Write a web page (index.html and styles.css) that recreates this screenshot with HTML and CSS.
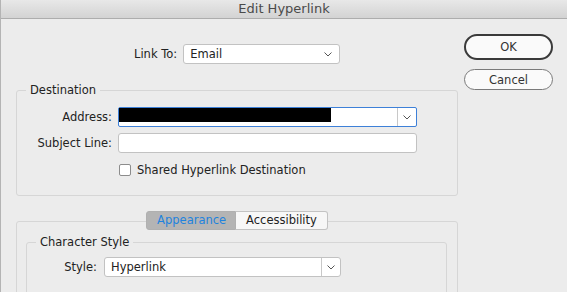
FILE: index.html
```html
<!DOCTYPE html>
<html lang="en">
<head>
    <meta charset="UTF-8">
    <title>Edit Hyperlink</title>
    <link rel="stylesheet" href="styles.css">
</head>
<body>
    <div class="titlebar">Edit Hyperlink</div>

    <div class="dialog">
        <div class="main">
            <div class="link-row">
                <span class="label">Link To:</span>
                <div class="select link-select">
                    <span class="value">Email</span>
                    <svg class="chev" width="8" height="5" viewBox="0 0 8 5"><polyline points="0.5,0.5 4,4 7.5,0.5" fill="none" stroke="#555" stroke-width="1"/></svg>
                </div>
            </div>

            <fieldset class="group dest">
                <legend>Destination</legend>
                <div class="form-grid">
                    <span class="label">Address:</span>
                    <div class="select combo focused">
                        <span class="redacted"></span>
                        <span class="divider"></span>
                        <svg class="chev" width="8" height="5" viewBox="0 0 8 5"><polyline points="0.5,0.5 4,4 7.5,0.5" fill="none" stroke="#555" stroke-width="1"/></svg>
                    </div>
                    <span class="label">Subject Line:</span>
                    <div class="text-input"></div>
                    <span></span>
                    <label class="check-row"><span class="checkbox"></span>Shared Hyperlink Destination</label>
                </div>
            </fieldset>

            <div class="tabs">
                <span class="tab active">Appearance</span>
                <span class="tab">Accessibility</span>
            </div>

            <div class="panel">
                <fieldset class="group charstyle">
                    <legend>Character Style</legend>
                    <div class="style-grid">
                        <span class="label">Style:</span>
                        <div class="select combo">
                            <span class="value">Hyperlink</span>
                            <span class="divider"></span>
                            <svg class="chev" width="8" height="5" viewBox="0 0 8 5"><polyline points="0.5,0.5 4,4 7.5,0.5" fill="none" stroke="#555" stroke-width="1"/></svg>
                        </div>
                    </div>
                </fieldset>
            </div>
        </div>

        <div class="buttons">
            <button class="btn default">OK</button>
            <button class="btn">Cancel</button>
        </div>
    </div>
</body>
</html>
```

FILE: styles.css
```css
* {
    margin: 0;
    padding: 0;
    box-sizing: border-box;
}

body {
    width: 567px;
    height: 292px;
    overflow: hidden;
    background: #ececec;
    font-family: 'DejaVu Sans', sans-serif;
    font-size: 11.5px;
    color: #222;
    border-left: 1px solid #b4b4b4;
}

.titlebar {
    height: 19px;
    line-height: 18px;
    text-align: center;
    font-size: 13px;
    color: #4a4a4a;
    background: linear-gradient(#e8e8e8, #d3d3d3);
    border-bottom: 1px solid #adadad;
}

.dialog {
    display: flex;
    align-items: flex-start;
}

.main {
    width: 458px;
    padding-left: 15px;
}

/* link to row */
.link-row {
    display: flex;
    align-items: center;
    gap: 6px;
    margin-top: 25px;
    padding-left: 118px;
}

.select {
    display: flex;
    align-items: center;
    height: 20px;
    background: #fff;
    border: 1px solid #c2c2c2;
    border-radius: 3px;
}

.select .value {
    flex: 1;
    padding-left: 6px;
}

.link-select {
    width: 157px;
}

.link-select .chev {
    margin-right: 7px;
}

.combo .divider {
    width: 1px;
    align-self: stretch;
    background: #c8c8c8;
    margin-right: 5px;
}

.combo .chev {
    margin-right: 5px;
}

/* groups */
.group {
    border: 1px solid #d6d6d6;
    border-radius: 3px;
}

.group legend {
    margin-left: 9px;
    padding: 0 4px;
    line-height: 14px;
    color: #222;
}

.dest {
    width: 442px;
    margin-top: 19px;
    padding: 10px 0 18px 0;
}

.form-grid {
    display: grid;
    grid-template-columns: 95px 299px;
    column-gap: 6px;
    row-gap: 6px;
    align-items: center;
}

.form-grid .label,
.style-grid .label {
    text-align: right;
}

.combo.focused {
    border: 1.5px solid #3d80d8;
    border-radius: 2px;
    height: 20px;
}

.redacted {
    flex: 1;
    align-self: stretch;
    background: linear-gradient(#000 80%, transparent 80%);
    margin-right: 66px;
}

.text-input {
    height: 20px;
    background: #fff;
    border: 1px solid #c2c2c2;
    border-radius: 3px;
}

.check-row {
    display: flex;
    align-items: center;
    gap: 6px;
    margin-top: 4px;
    padding-left: 1px;
}

.checkbox {
    width: 12px;
    height: 12px;
    background: #fff;
    border: 1px solid #8c8c8c;
    border-radius: 2px;
}

/* tabs */
.tabs {
    position: relative;
    z-index: 1;
    display: flex;
    justify-content: center;
    margin-top: 15px;
    margin-bottom: -9px;
    width: 442px;
}

.tab {
    height: 19px;
    line-height: 17px;
    padding: 0 10px;
    background: #f7f7f7;
    border: 1px solid #c3c3c3;
    border-left: none;
    border-radius: 0 3px 3px 0;
}

.tab.active {
    background: #b4b4b4;
    color: #1f83de;
    border: 1px solid #b0b0b0;
    border-radius: 3px 0 0 3px;
    width: 90px;
    text-align: center;
}

.panel {
    width: 442px;
    height: 80px;
    border: 1px solid #d6d6d6;
    border-radius: 3px;
    padding: 13px 10px 0 9px;
}

.charstyle {
    height: 70px;
    padding: 8px 0 0 0;
}

.style-grid {
    display: grid;
    grid-template-columns: 70px 237px;
    column-gap: 7px;
    align-items: center;
}

/* buttons */
.buttons {
    display: flex;
    flex-direction: column;
    gap: 9px;
    margin-left: 5px;
    margin-top: 15px;
}

.btn {
    width: 89px;
    height: 21px;
    font-family: 'DejaVu Sans', sans-serif;
    font-size: 11.5px;
    color: #333;
    background: #fafafa;
    border: 1px solid #7a7a7a;
    border-radius: 11px;
}

.btn.default {
    height: 26px;
    border: 2px solid #3a3a3a;
    border-radius: 13px;
}
```
